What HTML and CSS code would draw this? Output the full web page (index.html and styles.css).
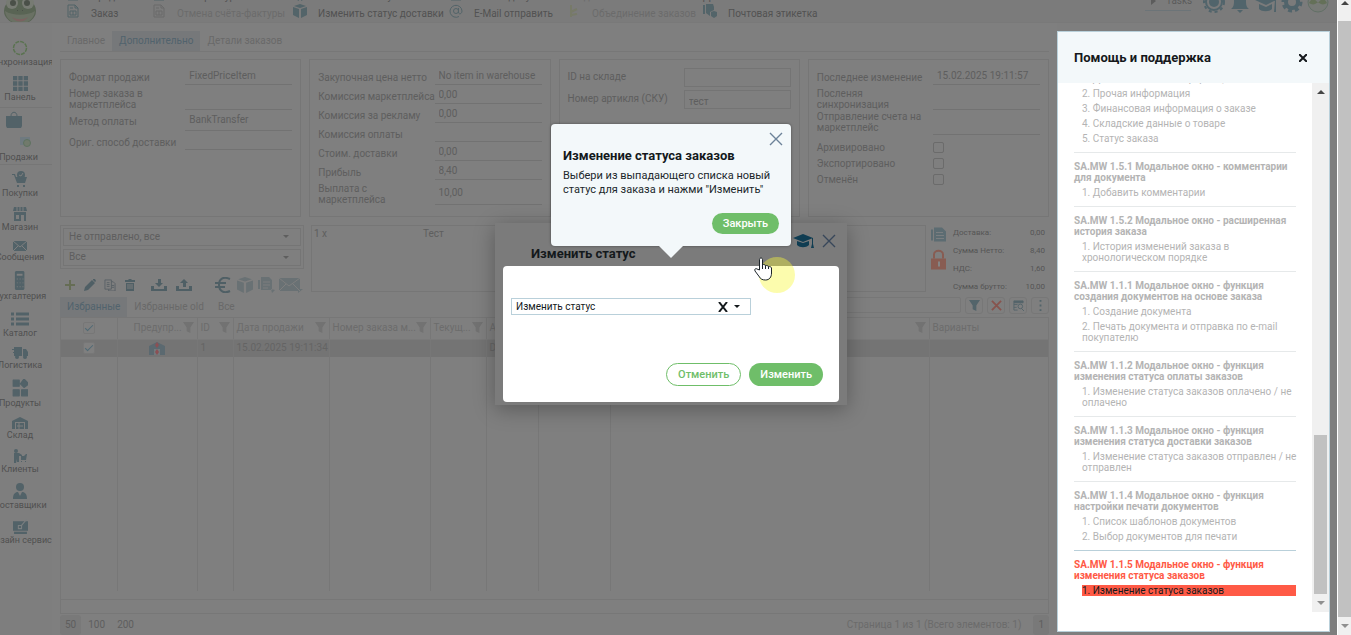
FILE: index.html
```
<!DOCTYPE html>
<html lang="ru">
<head>
<meta charset="utf-8">
<title>Заказы</title>
<link rel="stylesheet" href="styles.css">
</head>
<body>
<svg class="defs" aria-hidden="true">
  <defs>
    <symbol id="funnel" viewBox="0 0 12 12"><path d="M0 0h12L8 6v6l-4-2V6z"/></symbol>
    <symbol id="caret" viewBox="0 0 6 3"><path d="M0 0h6L3 3z"/></symbol>
    <symbol id="cross" viewBox="0 0 14 14"><path d="M1 1l12 12M13 1L1 13" fill="none" stroke="currentColor" stroke-width="1.400"/></symbol>
    <symbol id="cap" viewBox="0 0 22 14"><path d="M0 4L10 0l10 4-10 4zM4 7l6 2 6-2v4c-3 3-9 3-12 0zM19 4h1v6l1 4h-3l1-4z"/></symbol>
    <symbol id="sheet" viewBox="0 0 12 14"><path d="M1 1h7l3 3v9H1zM8 1v3h3M3 4h3M3 7h6v4H3zM6 7v4" fill="none" stroke="currentColor"/></symbol>
    <symbol id="box" viewBox="0 0 14 14"><path d="M0 3l6 2v9l-6-3zM14 3L8 5v9l6-3zM1 2l6-2 6 2-6 2z"/></symbol>
  </defs>
</svg>
<div class="page">
  <div class="app">
    <header class="topbar">
      <svg class="frog" viewBox="0 0 36 32"><ellipse cx="18" cy="18" rx="16" ry="13" fill="#596454"/><circle cx="10" cy="10" r="6" fill="#777b73"/><circle cx="26" cy="10" r="6" fill="#777b73"/><circle cx="11" cy="10" r="3" fill="#4a5048"/><circle cx="25" cy="10" r="3" fill="#4a5048"/><path d="M3 18c8 5 22 5 30 0-2 17-28 17-30 0z" fill="#6a7164"/><path d="M15 17h1v1h-1zM20 17h1v1h-1z" fill="#4a5048"/><path d="M10 24c5 3 11 3 16 0-4 6-12 6-16 0z" fill="#7b6260"/></svg>
      <nav class="commands">
        <div class="command-col"><a href="#"><svg viewBox="0 0 12 14"><use href="#sheet"/></svg>Продажа</a><a href="#"><svg viewBox="0 0 12 14"><use href="#sheet"/></svg>Заказ</a></div>
        <div class="command-col cancel"><a href="#"><svg viewBox="0 0 12 14"><use href="#sheet"/></svg>Счёт-фактура</a><a href="#" class="off"><svg viewBox="0 0 12 14"><use href="#sheet"/></svg>Отмена счёта-фактуры</a></div>
        <div class="command-col ship"><a href="#"><svg viewBox="0 0 14 14"><use href="#box"/></svg>Изменить статус</a><a href="#"><svg viewBox="0 0 14 14"><use href="#box"/></svg>Изменить статус доставки</a></div>
        <div class="command-col mail"><a href="#"><svg viewBox="0 0 12 14"><use href="#sheet"/></svg>Новый документ</a><a href="#"><svg viewBox="0 0 14 14"><path d="M9.500 4v4c0 3 3.500 2 3.500-1A6 6 0 1 0 10 12.500M9.500 7a2.500 2.500 0 1 1-5 0 2.500 2.500 0 0 1 5 0z" fill="none" stroke="currentColor"/></svg>E-Mail отправить</a></div>
        <div class="command-col join"><a href="#" class="off">Разделение</a><a href="#" class="off"><svg viewBox="0 0 12 14"><path d="M3 1v12M3 8l6-3M3 11l6-1" fill="none" stroke="#777a68" stroke-width="2"/></svg>Объединение заказов</a></div>
        <div class="command-col"><a href="#">Доставка</a><a href="#"><svg viewBox="0 0 14 14"><path d="M0 1h2v9H0zM3 0h7l1 3v3l-4 2v4L3 9zM8 8l3-1 3 1v4l-3 2-3-2z"/></svg>Почтовая этикетка</a></div>
      </nav>
      <div class="account">
        <a href="#" class="tasks"><svg viewBox="0 0 5 8"><path d="M0 0l5 4-5 4z"/></svg>Tasks</a>
        <svg viewBox="0 0 22 22"><circle cx="11" cy="11" r="8" fill="none" stroke="currentColor" stroke-width="2"/><circle cx="11" cy="11" r="10" fill="none" stroke="currentColor" stroke-width="2" stroke-dasharray="3 3"/><circle cx="11" cy="11" r="5"/></svg>
        <svg viewBox="0 0 22 22"><path d="M2 18c3-2 3-5 3-9 0-8 12-8 12 0 0 4 0 7 3 9zM8 19h6l-3 3z"/></svg>
        <svg viewBox="0 0 22 22"><path d="M0 9l11-5 10 5-10 5zM4 13l7 3 6-3v5c-3 3-10 3-13 0zM20 9h1v12h-2z"/></svg>
        <svg viewBox="0 0 22 22"><circle cx="11" cy="11" r="6" fill="none" stroke="currentColor" stroke-width="4"/><circle cx="11" cy="11" r="9" fill="none" stroke="currentColor" stroke-width="3" stroke-dasharray="4 3"/></svg>
        <svg viewBox="0 0 22 22"><circle cx="11" cy="11" r="10" fill="#777a76" stroke="#627066"/><path d="M2 12c3-6 6-4 9 0 3-4 6-6 9 0-3 2-6 2-9-1-3 3-6 3-9 1z" fill="#647058"/></svg>
      </div>
    </header>

    <nav class="sidebar">
      <a href="#"><svg height="16" viewBox="0 0 16 16"><circle cx="8" cy="8" r="6.500" fill="none" stroke="#5a7350" stroke-width="1.500" stroke-dasharray="4 1"/></svg>Синхронизация</a>
      <a href="#"><svg height="15" viewBox="0 0 14 14"><path d="M0 0h4v4H0zM5 0h4v4H5zM10 0h4v4h-4zM0 5h4v4H0zM5 5h4v4H5zM10 5h4v4h-4zM0 10h4v4H0zM5 10h4v4H5zM10 10h4v4h-4z"/></svg>Панель</a>
      <a href="#" class="active"><svg class="bag" height="17" viewBox="0 0 16 17"><path d="M0 5h16v10l-1 2H1l-1-2z"/><path d="M5 5c0-5 6-5 6 0" fill="none" stroke="currentColor"/></svg><svg class="deal" height="14" viewBox="0 0 14 14"><path d="M1 3h10v8H1z" fill="#6f7a80"/><circle cx="8" cy="9" r="3.500" fill="#717a6c" stroke="#5e7260"/></svg>Продажи</a>
      <a href="#"><svg height="16" viewBox="0 0 16 16"><path d="M0 3h3l1 3h11l-2 6H5L2 4H0zM5 14h2v2H5zM11 14h2v2h-2z"/><circle cx="9" cy="4" r="4"/><path d="M7 4l2 1 2-3" fill="none" stroke="#7e7e7e"/></svg>Покупки</a>
      <a href="#"><svg height="14" viewBox="0 0 14 14"><path d="M1 0h12l1 4H0zM1 5h12v9H1zM3 8v4h3V8zM8 8v6h3V8z" fill-rule="evenodd"/><path d="M4 0v4M7 0v4M10 0v4" stroke="#7e7e7e"/></svg>Магазин</a>
      <a href="#"><svg height="10" viewBox="0 0 14 10"><path d="M0 0h14v10H0z"/><path d="M0 0l7 6 7-6M0 10l5-5M14 10L9 5" fill="none" stroke="#7e7e7e"/></svg>Сообщения</a>
      <a href="#"><svg height="19" viewBox="0 0 14 20"><path d="M3 0h8l1 1v18l-1 1H3l-1-1V1z"/><path d="M4 3h6v2H4zM4 8h1v1H4zM7 8h1v1H7zM10 8h1v1h-1zM4 12h1v1H4zM7 12h1v1H7zM10 12h1v1h-1zM4 16h1v1H4zM7 16h1v1H7zM10 16h1v1h-1z" fill="#7e7e7e"/></svg>Бухгалтерия</a>
      <a href="#"><svg height="17" viewBox="0 0 18 14"><path d="M0 1h3v3H0zM5 1h13v3H5zM0 6h3v3H0zM5 6h13v3H5zM0 11h3v3H0zM5 11h13v3H5z"/></svg>Каталог</a>
      <a href="#"><svg height="12" viewBox="0 0 16 12"><path d="M2 0h8v9H2zM11 2h3l2 3v4h-5zM0 2h2v1H0zM1 5h1v1H1z"/><circle cx="5" cy="10" r="2"/><circle cx="13" cy="10" r="2"/></svg>Логистика</a>
      <a href="#"><svg height="18" viewBox="0 0 14 15"><path d="M1 1h5v5H1zM10 0l4 4-4 3-3-3zM1 9h5v5H1zM8 9h5v5H8z" stroke="currentColor" stroke-linejoin="round"/></svg>Продукты</a>
      <a href="#"><svg height="12" viewBox="0 0 16 12"><path d="M0 4l8-4 8 4v8h-3V5H3v7H0zM4 6h8v6H4z"/><path d="M5 9h6M7 6v6" stroke="#7e7e7e"/></svg>Склад</a>
      <a href="#"><svg height="14" viewBox="0 0 14 14"><circle cx="3" cy="2" r="2"/><path d="M1 4h5l3 2v1H6v6H4v-3l-1 4H1zM8 7h3l2-2h1l-1 6H8zM8 12h1v1H8zM12 12h1v1h-1z"/></svg>Клиенты</a>
      <a href="#"><svg height="16" viewBox="0 0 14 16"><circle cx="7" cy="4" r="4"/><path d="M0 16c0-5 2-7 5-7l2 4 2-4c3 0 5 2 5 7z"/></svg>Поставщики</a>
      <a href="#"><svg height="15" viewBox="0 0 14 14"><path d="M0 2h14v9H0zM1 12h12v2H1z"/><path d="M13 0L8 6M5 6h3v3H5z" fill="none" stroke="#7b7f80"/></svg>Дизайн сервис</a>
    </nav>

    <main class="content">
      <nav class="tabs">
        <a href="#">Главное</a><a href="#" class="current">Дополнительно</a><a href="#">Детали заказов</a>
      </nav>
      <section class="panels">
        <div class="panel wide-label">
          <div class="row"><label for="f1">Формат продажи</label><input id="f1" value="FixedPriceItem"></div>
          <div class="row tall"><label for="f2">Номер заказа в маркетплейса</label><input id="f2"></div>
          <div class="row tall"><label for="f3">Метод оплаты</label><input id="f3" value="BankTransfer"></div>
          <div class="row"><label for="f4">Ориг. способ доставки</label><input id="f4"></div>
        </div>
        <div class="panel wide-label">
          <div class="row"><label for="g1">Закупочная цена нетто</label><input id="g1" value="No item in warehouse"></div>
          <div class="row"><label for="g2">Комиссия маркетплейса</label><input id="g2" value="0,00"></div>
          <div class="row"><label for="g3">Комиссия за рекламу</label><input id="g3" value="0,00"></div>
          <div class="row"><label for="g4">Комиссия оплаты</label><input id="g4"></div>
          <div class="row"><label for="g5">Стоим. доставки</label><input id="g5" value="0,00"></div>
          <div class="row"><label for="g6">Прибыль</label><input id="g6" value="8,40"></div>
          <div class="row tall"><label for="g7">Выплата с<br>маркетплейса</label><input id="g7" value="10,00"></div>
        </div>
        <div class="panel boxed">
          <div class="row"><label for="h1">ID на складе</label><input id="h1"></div>
          <div class="row"><label for="h2">Номер артикля (СКУ)</label><input id="h2" value="тест"></div>
        </div>
        <div class="panel">
          <div class="row"><label for="k1">Последнее изменение</label><input id="k1" value="15.02.2025 19:11:57"></div>
          <div class="row tall"><label for="k2">Посленяя синхронизация</label><input id="k2"></div>
          <div class="row taller"><label for="k3">Отправление счета на маркетплейс</label><input id="k3"></div>
          <div class="checks">
            <div class="row check"><label for="k4">Архивировано</label><input type="checkbox" id="k4"></div>
            <div class="row check"><label for="k5">Экспортировано</label><input type="checkbox" id="k5"></div>
            <div class="row check"><label for="k6">Отменён</label><input type="checkbox" id="k6"></div>
          </div>
        </div>
      </section>

      <section class="summary">
        <div class="filters">
          <div class="filter-box">
            <div class="pick"><select aria-label="Отправка"><option>Не отправлено, все</option></select><svg viewBox="0 0 6 3"><use href="#caret"/></svg></div>
            <div class="pick"><select aria-label="Статус"><option>Все</option></select><svg viewBox="0 0 6 3"><use href="#caret"/></svg></div>
          </div>
          <div class="tools">
            <button aria-label="Добавить"><svg viewBox="0 0 12 12"><path d="M5 1h2v4h4v2H7v4H5V7H1V5h4z" fill="#666d55"/></svg></button>
            <button aria-label="Править"><svg viewBox="0 0 12 12"><path d="M0 12l1-4 7-7 3 3-7 7zM9 0h2l1 2-1 1-2-2z"/></svg></button>
            <button aria-label="Копировать"><svg viewBox="0 0 13 13"><path d="M1 1h7v10H1zM8 3h2l2 2v8H5v-2M3 4h3M3 6h3M3 8h3M8 7h3M8 9h3" fill="none" stroke="#596166"/></svg></button>
            <button aria-label="Удалить"><svg viewBox="0 0 12 12"><path d="M1 1h3l1-1h2l1 1h3v2H1zM2 4h8v8H2z"/><path d="M4 5v5M6 5v5M8 5v5" stroke="#7e7e7e"/></svg></button>
            <button class="wide" aria-label="Импорт"><svg viewBox="0 0 16 12"><path d="M0 7h3v3h10V7h3v5H0zM7 0h3v4h2L8 8 4 4h3z"/></svg></button>
            <button aria-label="Экспорт"><svg viewBox="0 0 16 12"><path d="M0 7h3v3h10V7h3v5H0zM7 8h3V4h2L8 0 4 4h3z"/></svg></button>
            <span class="big"><svg viewBox="0 0 16 16"><path d="M15 2C8-1 4 2 4 8s5 9 11 6M0 6h11M0 10h10" fill="none" stroke="currentColor" stroke-width="2"/></svg></span>
            <span class="big pale"><svg viewBox="0 0 14 14"><use href="#box"/></svg></span>
            <span class="big pale"><svg viewBox="0 0 18 16"><path d="M0 3h2v9H0zM3 0h8l3 3v10H3zM14 16l3-3-4-1z"/><path d="M5 5h7M5 8h7M5 11h5" stroke="#7e7e7e"/></svg></span>
            <span class="big pale env"><svg viewBox="0 0 24 16"><path d="M0 1h21v13H0zM24 12l-5 4v-4z"/><path d="M0 1l10 8L21 1M0 14l7-7M21 14l-7-7" fill="none" stroke="#7e7e7e"/></svg></span>
          </div>
        </div>
        <div class="lines"><span>1 x</span><span>Тест</span></div>
        <div class="totals">
          <div class="marks">
            <svg viewBox="0 0 15 14"><path d="M0 2h2v11H0zM3 0h8l4 4v10H3z"/><path d="M5 5h7M5 8h8M5 11h8" stroke="#7a7e80"/></svg>
            <svg class="lock" viewBox="0 0 15 20"><path d="M0 9h15v11H0z"/><path d="M3 9V5c0-5 9-5 9 0v4" fill="none" stroke="currentColor" stroke-width="2"/><path d="M7 12h2v5H7z" fill="#858585"/></svg>
          </div>
          <dl><dt>Доставка:</dt><dd>0,00</dd><dt>Сумма Нетто:</dt><dd>8,40</dd><dt>НДС:</dt><dd>1,60</dd><dt>Сумма брутто:</dt><dd>10,00</dd></dl>
        </div>
      </section>

      <section class="list">
        <div class="list-head">
          <nav class="tabs"><a href="#" class="current">Избранные</a><a href="#">Избранные old</a><a href="#">Все</a></nav>
          <div class="search"><input aria-label="Поиск">
            <button aria-label="Фильтр"><svg viewBox="0 0 12 12"><use href="#funnel"/></svg></button>
            <button aria-label="Сбросить" class="red"><svg viewBox="0 0 12 12"><path d="M1 1l10 10M11 1L1 11" stroke="currentColor" stroke-width="2"/></svg></button>
            <button aria-label="Столбцы"><svg viewBox="0 0 12 12"><path d="M1 1h10v2H1zM1 5h4M1 8h3M1 11h4M1 3v8" stroke="currentColor"/><circle cx="8" cy="7" r="2.500" fill="none" stroke="currentColor"/><path d="M9 9l3 3" stroke="currentColor"/></svg></button>
            <button aria-label="Ещё"><svg viewBox="0 0 12 12"><path d="M5 0h2v2H5zM5 5h2v2H5zM5 10h2v2H5z"/></svg></button>
          </div>
        </div>
        <div class="grid">
          <table>
            <colgroup><col class="c56"><col class="c80"><col class="c36"><col class="c96"><col class="c101"><col class="c56"><col class="c52"><col class="c72"><col><col class="c119"></colgroup>
            <thead><tr>
              <th><input type="checkbox" checked aria-label="Выбрать все"></th>
              <th><div class="indent"><span>Предупр...</span><svg viewBox="0 0 12 12"><use href="#funnel"/></svg></div></th>
              <th><div><span>ID</span><svg viewBox="0 0 12 12"><use href="#funnel"/></svg></div></th>
              <th><div><span>Дата продажи</span><svg viewBox="0 0 12 12"><use href="#funnel"/></svg></div></th>
              <th><div><span>Номер заказа м...</span><svg viewBox="0 0 12 12"><use href="#funnel"/></svg></div></th>
              <th><div><span>Текущ...</span><svg viewBox="0 0 12 12"><use href="#funnel"/></svg></div></th>
              <th><div><span>А</span></div></th>
              <th></th>
              <th><div class="end"><svg viewBox="0 0 12 12"><use href="#funnel"/></svg></div></th>
              <th><div><span>Варианты</span></div></th>
            </tr></thead>
            <tbody>
              <tr class="chosen">
                <td><input type="checkbox" checked aria-label="Выбрать заказ 1"></td>
                <td class="mid"><svg viewBox="0 0 16 13"><path d="M0 4l8-4 8 4v9H0z"/><path d="M5 7h6v6H5z" fill="#73797c"/><path d="M8 0l2 3-2 3-2-3zM8 7l2 3-2 3-2-3z" fill="#8b5054"/></svg></td>
                <td>1</td><td>15.02.2025 19:11:34</td><td></td><td></td><td>D</td><td></td><td></td><td></td>
              </tr>
              <tr class="rest"><td></td><td></td><td></td><td></td><td></td><td></td><td></td><td></td><td></td><td></td></tr>
            </tbody>
          </table>
        </div>
        <div class="totals-row"></div>
      </section>
      <footer class="pager"><button class="on">50</button><button>100</button><button>200</button><span>Страница 1 из 1 (Всего элементов: 1)</span><button class="on">1</button></footer>
    </main>

    <div class="help-column">
      <aside class="help">
        <header><h2>Помощь и поддержка</h2><button aria-label="Закрыть помощь"><svg viewBox="0 0 8 8"><path d="M0 0l8 8M8 0L0 8" stroke="currentColor" stroke-width="2"/></svg></button></header>
        <div class="help-body">
          <div class="topics">
            <section><ol><li><a href="#">1. Дополнительная информация</a></li><li><a href="#">2. Прочая информация</a></li><li><a href="#">3. Финансовая информация о заказе</a></li><li><a href="#">4. Складские данные о товаре</a></li><li><a href="#">5. Статус заказа</a></li></ol></section>
            <section><h3>SA.MW 1.5.1 Модальное окно - комментарии для документа</h3><ol><li><a href="#">1. Добавить комментарии</a></li></ol></section>
            <section><h3>SA.MW 1.5.2 Модальное окно - расширенная история заказа</h3><ol><li><a href="#">1. История изменений заказа в<br>хронологическом порядке</a></li></ol></section>
            <section><h3>SA.MW 1.1.1 Модальное окно - функция создания документов на основе заказа</h3><ol><li><a href="#">1. Создание документа</a></li><li><a href="#">2. Печать документа и отправка по e-mail покупателю</a></li></ol></section>
            <section><h3>SA.MW 1.1.2 Модальное окно - функция изменения статуса оплаты заказов</h3><ol><li><a href="#">1. Изменение статуса заказов оплачено / не оплачено</a></li></ol></section>
            <section><h3>SA.MW 1.1.3 Модальное окно - функция изменения статуса доставки заказов</h3><ol><li class="keep"><a href="#">1. Изменение статуса заказов отправлен / не<br>отправлен</a></li></ol></section>
            <section><h3>SA.MW 1.1.4 Модальное окно - функция настройки печати документов</h3><ol><li><a href="#">1. Список шаблонов документов</a></li><li><a href="#">2. Выбор документов для печати</a></li></ol></section>
            <section class="now"><h3>SA.MW 1.1.5 Модальное окно - функция изменения статуса заказов</h3><ol><li><a href="#">1. Изменение статуса заказов</a></li></ol></section>
          </div>
          <div class="scroll inner"><svg viewBox="0 0 8 4"><path d="M0 4l4-4 4 4z"/></svg><div class="thumb"></div><svg class="soft" viewBox="0 0 8 4"><path d="M0 0h8L4 4z"/></svg></div>
        </div>
      </aside>
    </div>
  </div>
  <div class="scroll outer"><svg viewBox="0 0 8 4"><path d="M0 4l4-4 4 4z"/></svg><div class="thumb"></div><svg class="soft" viewBox="0 0 8 4"><path d="M0 0h8L4 4z"/></svg></div>

  <div class="overlay">
    <div class="hint" role="dialog" aria-labelledby="hint-title">
      <button class="plain" aria-label="Закрыть подсказку"><svg viewBox="0 0 14 14"><use href="#cross"/></svg></button>
      <h2 id="hint-title">Изменение статуса заказов</h2>
      <p>Выбери из выпадающего списка новый статус для заказа и нажми "Изменить"</p>
      <button class="pill">Закрыть</button>
    </div>
    <div class="modal" role="dialog" aria-labelledby="modal-title">
      <header><h2 id="modal-title">Изменить статус</h2>
        <button class="plain cap" aria-label="Обучение"><svg viewBox="0 0 22 14"><use href="#cap"/></svg></button>
        <button class="plain" aria-label="Закрыть окно"><svg viewBox="0 0 14 14"><use href="#cross"/></svg></button>
      </header>
      <form class="modal-body">
        <div class="status"><select aria-label="Статус заказа"><option>Изменить статус</option></select><button type="button" class="clear" aria-label="Очистить"><svg viewBox="0 0 10 10"><path d="M1 0l8 10M9 0L1 10" stroke="currentColor" stroke-width="2"/></svg></button><svg class="arrow" viewBox="0 0 6 3"><use href="#caret"/></svg></div>
        <div class="actions"><button type="button" class="pill hollow">Отменить</button><button type="button" class="pill">Изменить</button></div>
      </form>
    </div>
    <span class="halo"></span>
    <svg class="pointer" viewBox="0 0 18 24"><path d="M5.500 13V2.500c0-2 3-2 3 0V8c1-1 3-.500 3 1 1-1 3-.500 3 1 1-1 3 0 3 1v5c0 4-2 7-6 7-3 0-5-1-6-3l-4.500-6c-1-2 1-3 2-2z" fill="#fff" stroke="#1b2328"/><path d="M8.500 8v4M11.500 9v3M14.500 10v2" stroke="#1b2328"/></svg>
  </div>
</div>
</body>
</html>
```
FILE: styles.css
```
* { box-sizing: border-box; }
body { margin: 0; font: 10px/12px Roboto, "Liberation Sans", sans-serif; color: #5e5e5e; background: #7e7e7e; }
a { color: inherit; text-decoration: none; }
h2, h3, p, ol, dl, dd { margin: 0; padding: 0; }
ol { list-style: none; }
svg { fill: currentColor; display: block; flex: none; }
button, input, select { font: inherit; color: inherit; background: none; border: 0; padding: 0; margin: 0; border-radius: 0; min-width: 0; }
select { appearance: none; }
input[type="checkbox"] { appearance: none; width: 11px; height: 11px; border: 1px solid #6b6b6b; border-radius: 2px; }
.defs { position: absolute; width: 0; height: 0; }

.page { position: relative; display: flex; height: 100vh; overflow: hidden; }
.app { flex: 1; min-width: 0; display: grid; grid-template-columns: 52px minmax(0, 1fr) 280px; grid-template-rows: 23px minmax(0, 1fr); }

.topbar { grid-column: 1 / -1; display: flex; overflow: hidden; background: #7b7b7b; border-bottom: 1px solid #797979; }
.frog { width: 36px; height: 32px; margin: -7px 0 0 2px; }
.commands { flex: 1; display: flex; margin: -13px 0 0 28px; color: #525252; }
.command-col { display: flex; flex-direction: column; gap: 1px; width: 86px; white-space: nowrap; }
.command-col.cancel { width: 141px; }
.command-col.ship { width: 156px; }
.command-col.mail { width: 118px; }
.command-col.join { width: 136px; }
.command-col a { display: flex; gap: 11px; height: 16px; line-height: 19px; }
.command-col svg { width: 14px; height: 14px; color: #536469; }
.command-col .off, .command-col .off svg { color: #6b6b6b; }
.account { display: flex; gap: 4px; margin: -9px 8px 0 0; color: #51646b; }
.account > svg { width: 22px; height: 22px; }
.tasks { display: flex; gap: 10px; width: 46px; height: 20px; margin-right: 8px; padding: 4px 0 0 6px; border-bottom: 1px solid #6c7478; color: #5c5c5c; }
.tasks svg { width: 5px; height: 8px; margin-top: 2px; }

.sidebar { display: flex; flex-direction: column; align-items: center; gap: 8px; width: 40px; padding-top: 17px; font-size: 9px; color: #505050; }
.sidebar a { display: flex; flex-direction: column; align-items: center; white-space: nowrap; }
.sidebar svg { color: #526268; max-width: 18px; }
.sidebar .active { width: 54px; height: 58px; margin: -4px 0 -2px 12px; padding: 3px 14px 0 0; border: 1px solid #767676; border-left: 0; }
.active .bag { margin-right: 10px; }
.active .deal { margin: 6px 0 3px 14px; }

.content { display: flex; flex-direction: column; min-width: 0; padding: 8px 8px 0; background: #7f7f7f; }
.tabs { display: flex; flex: none; color: #696969; }
.tabs a { padding: 4px 7px; }
.tabs .current { background: #76787a; color: #51636d; }
.content > .tabs { border-bottom: 1px solid #777; }
.panels { display: grid; grid-template-columns: repeat(4, minmax(0, 1fr)); gap: 8px; height: 158px; margin: 7px 0 8px; flex: none; }
.panel { border: 1px solid #767676; padding: 6px 8px; }
.row { display: grid; grid-template-columns: minmax(0, 1fr) 107px; height: 19px; align-items: center; line-height: 11px; }
.row.tall { height: 23px; }
.row.taller { height: 27px; }
.row label { padding-top: 3px; }
.row.taller label { padding-top: 0; }
.wide-label .row label { margin-right: -4px; }
.row input:not([type]) { height: 100%; padding: 0 4px; border-bottom: 1px solid #727272; }
.checks { padding-top: 4px; }
.row.check { height: 16px; }
.row.check label { padding-top: 1px; }
.boxed { padding-top: 8px; }
.boxed .row { margin-bottom: 3px; }
.boxed .row input:not([type]) { border: 1px solid #747474; padding-top: 3px; }
.boxed .row label { padding: 0 0 3px; }

.summary { display: grid; grid-template-columns: 244px minmax(0, 1fr) 116px; gap: 7px; height: 72px; flex: none; }
.filter-box { border: 1px solid #767676; padding: 2px; display: grid; gap: 3px; height: 44px; }
.pick { display: grid; align-items: center; border: 1px solid #757575; }
.pick > * { grid-area: 1 / 1; }
.pick select { padding: 0 5px; }
.pick svg { width: 6px; height: 3px; justify-self: end; margin-right: 11px; }
.tools { display: flex; align-items: center; height: 28px; padding-top: 4px; color: #4f5f65; }
.tools button, .tools .big { width: 20px; display: grid; place-items: center; }
.tools button svg { width: 14px; height: 12px; }
.tools .wide { margin-left: 4px; width: 30px; }
.tools button.wide svg, .tools .wide + button svg { width: 16px; }
.tools .big { width: 22px; }
.tools button + .big { margin-left: auto; }
.tools .big svg { width: 18px; height: 16px; }
.tools .env { width: 26px; }
.tools .env svg { width: 24px; }
.tools .pale { color: #697174; }
.lines { border: 1px solid #767676; height: 67px; padding: 2px; display: grid; grid-template-columns: 109px 1fr; }
.totals { display: flex; gap: 7px; padding: 2px 4px 0 0; margin-left: -2px; font-size: 8px; line-height: 12px; color: #555; }
.marks { display: grid; gap: 7px; align-content: start; color: #5c6c72; }
.marks svg { width: 15px; height: 15px; }
.marks .lock { height: 21px; color: #885c52; }
.totals dl { flex: 1; display: grid; grid-template-columns: 1fr auto; gap: 6px 0; align-content: start; }
.totals dd { text-align: right; }

.list { flex: 1; min-height: 0; display: flex; flex-direction: column; }
.list-head { display: flex; justify-content: space-between; flex: none; }
.search { display: flex; gap: 4px; align-items: start; }
.search input { width: 400px; height: 16px; border: 1px solid #777; border-radius: 2px; }
.search button { width: 18px; height: 17px; border: 1px solid #777; border-radius: 3px; display: grid; place-items: center; color: #53646a; }
.search svg { width: 11px; height: 11px; }
.search .red { color: #87544e; }
.grid { flex: 1; min-height: 0; border: solid #777; border-width: 1px 1px 0; padding-bottom: 8px; }
table { width: 100%; height: 100%; table-layout: fixed; border-collapse: collapse; }
th, td { padding: 0 3px; font-weight: 400; text-align: left; white-space: nowrap; border-right: 1px solid #777; overflow: hidden; }
th:last-child, td:last-child { border-right: 0; }
th { height: 21px; color: #6c6c6c; border-bottom: 1px solid #7a7a7a; }
th div { display: flex; justify-content: space-between; align-items: center; }
th .indent { padding-left: 13px; }
th .end { justify-content: end; }
th svg { width: 11px; height: 11px; color: #727272; margin-top: -2px; }
td { height: 18px; color: #646464; }
.chosen { background: #747474; }
.rest td { height: auto; }
th:first-child, td:first-child { text-align: center; }
table input[type="checkbox"] { vertical-align: middle; width: 12px; height: 12px; border-color: #777; background: #7f7f7f; display: inline-grid; place-items: center; }
table input[type="checkbox"]::after { content: ""; width: 7px; height: 3px; border: solid #506a75; border-width: 0 0 1px 1px; rotate: -45deg; margin-bottom: 2px; }
.mid svg { width: 16px; height: 13px; margin: 0 auto; color: #5b6970; }
.c36 { width: 36px; } .c52 { width: 52px; } .c56 { width: 56px; } .c72 { width: 72px; } .c80 { width: 80px; }
.c96 { width: 96px; } .c101 { width: 101px; } .c119 { width: 119px; }
.totals-row { height: 15px; border: 1px solid #777; flex: none; }
.pager { display: flex; align-items: center; height: 21px; gap: 2px; flex: none; }
.pager button { padding: 4px 5px; border-radius: 3px; }
.pager .on { background: #797979; }
.pager span { margin-left: auto; margin-right: 10px; color: #6b6b6b; }

.help-column { padding: 8px 8px 3px 0; display: grid; min-height: 0; }
.help { display: flex; flex-direction: column; min-height: 0; border: 1px solid #b9d0da; background: #fff; padding-bottom: 19px; }
.help > header { display: flex; justify-content: space-between; align-items: center; height: 51px; flex: none; padding: 0 22px 0 16px; background: #f3f8fa; color: #15191c; }
.help h2 { font-size: 13px; line-height: 16px; font-weight: 700; }
.help header svg { width: 8px; height: 8px; }
.help-body { flex: 1; min-height: 0; display: flex; }
.topics { flex: 1; min-width: 0; overflow: hidden; display: flex; flex-direction: column; justify-content: flex-end; padding: 0 16px 16px; line-height: 11px; color: #b4b4b4; }
.topics section { flex: none; padding: 0 0 8px; border-bottom: 1px solid #e6e9ea; }
.topics section + section { padding-top: 8px; }
.topics h3 { font-size: 10px; line-height: 11px; font-weight: 700; }
.topics li { margin: 4px 0 0 8px; }
.topics .keep { white-space: nowrap; }
.topics section:nth-last-child(2) { border-color: #b9d0da; }
.topics section.now { padding-bottom: 0; border: 0; color: #ff5a46; }
.now li { background: #ff5a46; color: #16191b; }

.scroll { display: flex; flex-direction: column; align-items: center; background: #f0f0f0; color: #454545; flex: none; }
.scroll svg { width: 8px; height: 4px; margin: 7px 0; }
.scroll .soft { color: #909090; }
.thumb { background: #c1c1c1; width: 13px; flex: 1; }
.inner { width: 17px; }
.inner .thumb { flex: 0 0 30%; margin-top: auto; }
.outer { width: 14px; border-left: 1px solid #fff; }
.outer > svg:first-child { margin: 1px 0 16px; }

.overlay { position: absolute; inset: 0 9px 0 0; display: flex; flex-direction: column; align-items: center; padding-top: 124px; pointer-events: none; }
.overlay > * { pointer-events: auto; }
.hint { position: relative; z-index: 2; width: 240px; padding: 8px 12px 12px; display: flex; flex-direction: column; border-radius: 4px; background: #f3f8fa; color: #20272b; box-shadow: 0 0 3px rgba(0, 0, 0, .4); }
.hint::after { content: ""; position: absolute; top: 100%; left: 50%; margin: -1px 0 0 -13px; border: 13px solid transparent; border-top-color: #f3f8fa; border-bottom: 0; }
.hint .plain { align-self: flex-end; margin-right: -4px; }
.plain { color: #6c8299; }
.plain svg { width: 14px; height: 14px; }
.hint h2, .modal h2 { font-size: 13px; line-height: 16px; font-weight: 700; color: #14191c; }
.hint h2 { margin: 2px 0 5px; }
.hint p { font-size: 11px; line-height: 14px; }
.pill { height: 21px; padding: 0 11px; border-radius: 12px; background: #6fbe69; color: #fff; font-size: 11px; font-weight: 500; }
.hint .pill { align-self: flex-end; margin-top: 16px; }
.modal { width: 352px; margin-top: -23px; padding: 0 8px 3px; background: #7b7b7b; box-shadow: 0 4px 20px rgba(0, 0, 0, .3); }
.modal header { display: flex; align-items: flex-start; height: 43px; padding: 11px 3px 0 28px; gap: 7px; }
.modal h2 { margin: 12px auto 0 0; }
.modal .plain { color: #38475a; }
.modal .cap { color: #103d52; }
.modal .cap svg { width: 22px; }
.modal-body { padding: 32px 16px 16px 8px; background: #fff; border-radius: 4px; }
.status { display: grid; grid-template-columns: 1fr 14px 20px; align-items: center; width: 240px; border: 1px solid #b9d0da; height: 17px; color: #14191c; }
.status select { grid-area: 1 / 1 / 2 / 4; padding: 0 4px; height: 15px; }
.status .clear { grid-area: 1 / 2; justify-self: center; }
.status .arrow { grid-area: 1 / 3; margin-left: 4px; width: 6px; height: 3px; }
.clear svg { width: 10px; height: 10px; }
.actions { display: flex; justify-content: flex-end; gap: 8px; margin-top: 48px; }
.actions .pill { height: 23px; }
.pill.hollow { background: #fff; border: 1px solid #6fbe69; color: #6fbe69; }
.halo { position: absolute; left: 50%; top: 257px; margin-left: 88px; width: 36px; height: 36px; border-radius: 50%; background: rgba(249, 249, 60, .42); }
.pointer { position: absolute; left: 50%; top: 257px; margin-left: 83px; width: 18px; height: 24px; }
```
